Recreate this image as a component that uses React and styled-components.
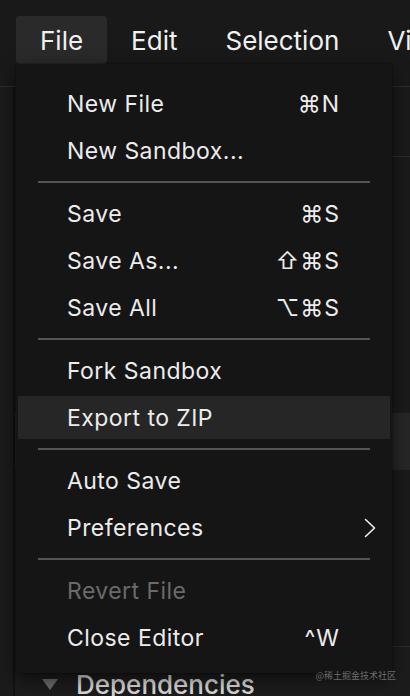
import React from 'react'
import styled, { createGlobalStyle } from 'styled-components'

const GlobalStyle = createGlobalStyle`
  html, body {
    margin: 0;
    padding: 0;
    background: #191919;
  }
  body {
    font-family: Inter, "Noto Sans", sans-serif;
    color: #ececec;
    -webkit-font-smoothing: antialiased;
  }
`

const menuItems = [
    { label: 'New File', shortcut: '⌘N' },
    { label: 'New Sandbox...' },
    { type: 'separator' },
    { label: 'Save', shortcut: '⌘S' },
    { label: 'Save As...', shortcut: '⇧⌘S' },
    { label: 'Save All', shortcut: '⌥⌘S' },
    { type: 'separator' },
    { label: 'Fork Sandbox' },
    { label: 'Export to ZIP', hovered: true },
    { type: 'separator' },
    { label: 'Auto Save' },
    { label: 'Preferences', submenu: true },
    { type: 'separator' },
    { label: 'Revert File', disabled: true },
    { label: 'Close Editor', shortcut: '^W' },
]

const ChevronRight = () => (
    <svg width="12" height="20" viewBox="0 0 12 20" fill="none">
        <polyline points="1.5,1.5 10.5,10 1.5,18.5" stroke="#f2f2f2" strokeWidth="1.6" strokeLinecap="round" strokeLinejoin="round" />
    </svg>
)

const App = () => {
    return (
        <Screen>
            <GlobalStyle />
            <MenuBar>
                <BarItem active>File</BarItem>
                <BarItem>Edit</BarItem>
                <BarItem>Selection</BarItem>
                <BarItem>View</BarItem>
            </MenuBar>
            <Workspace>
                <HeaderStrip />
                <Body>
                    <Rail />
                    <Panel>
                        <PanelRow height={69} bordered />
                        <PanelRow height={256} />
                        <PanelRow height={57} selected />
                        <PanelRow height={176} bordered />
                        <SectionRow>
                            <Caret />
                            <SectionTitle>Dependencies</SectionTitle>
                        </SectionRow>
                    </Panel>
                </Body>
            </Workspace>

            <Dropdown>
                {menuItems.map((item, i) =>
                    item.type === 'separator' ? (
                        <Separator key={i} />
                    ) : (
                        <Item key={i} hovered={item.hovered} disabled={item.disabled}>
                            <span>{item.label}</span>
                            {item.shortcut && <Shortcut>{item.shortcut}</Shortcut>}
                            {item.submenu && (
                                <SubArrow>
                                    <ChevronRight />
                                </SubArrow>
                            )}
                        </Item>
                    )
                )}
            </Dropdown>

            <Watermark>@稀土掘金技术社区</Watermark>
        </Screen>
    )
}

export default App

const Screen = styled.div`
    position: relative;
    width: 410px;
    height: 696px;
    overflow: hidden;
    background: #191919;
`

const MenuBar = styled.div`
    display: flex;
    padding: 16px 0 0 16px;
    height: 48px;
    white-space: nowrap;
`

const BarItem = styled.div`
    display: flex;
    align-items: center;
    height: 48px;
    padding: 0 24px;
    font-size: 26px;
    color: #f0f0f0;
    border-radius: 4px;
    background: ${p => (p.active ? '#2a2a2a' : 'transparent')};
`

const Workspace = styled.div`
    display: flex;
    flex-direction: column;
`

const HeaderStrip = styled.div`
    height: 22px;
    border-bottom: 1px solid #2b2b2b;
`

const Body = styled.div`
    display: flex;
`

const Rail = styled.div`
    width: 13px;
    border-right: 2px solid #121212;
    background: #1b1b1b;
`

const Panel = styled.div`
    flex: 1;
    display: flex;
    flex-direction: column;
`

const PanelRow = styled.div`
    height: ${p => p.height}px;
    background: ${p => (p.selected ? '#262626' : '#1a1a1a')};
    border-bottom: ${p => (p.bordered ? '1px solid #2c2c2c' : 'none')};
`

const SectionRow = styled.div`
    display: flex;
    align-items: center;
    gap: 18px;
    height: 74px;
    padding: 0 0 0 27px;
    background: #1c1c1c;
`

const Caret = styled.div`
    width: 0;
    height: 0;
    border-left: 8px solid transparent;
    border-right: 8px solid transparent;
    border-top: 11px solid #6a6a6a;
`

const SectionTitle = styled.div`
    font-size: 26px;
    font-weight: 500;
    color: #d6d6d6;
`

const Dropdown = styled.div`
    position: absolute;
    top: 64px;
    left: 16px;
    width: 376px;
    display: flex;
    flex-direction: column;
    padding: 16px 0 12px;
    background: #151515;
    border-radius: 0 0 4px 4px;
    box-shadow: 0 6px 18px rgba(0, 0, 0, 0.55), 0 0 2px rgba(0, 0, 0, 0.6);
`

const Item = styled.div`
    position: relative;
    display: flex;
    align-items: center;
    justify-content: space-between;
    height: 43px;
    margin: 2px;
    padding: 0 50px 0 49px;
    font-size: 23px;
    letter-spacing: 0.45px;
    white-space: nowrap;
    color: ${p => (p.disabled ? '#6a6a6a' : '#ececec')};
    background: ${p => (p.hovered ? '#262626' : 'transparent')};
`

const Shortcut = styled.span`
    font-family: Inter, "DejaVu Sans", sans-serif;
    font-size: 23px;
    letter-spacing: 1px;
`

const SubArrow = styled.span`
    position: absolute;
    right: 14px;
    top: 50%;
    display: flex;
    transform: translateY(-50%);
`

const Separator = styled.div`
    height: 2px;
    margin: 7px 22px;
    background: #555555;
`

const Watermark = styled.div`
    position: absolute;
    right: 14px;
    bottom: 14px;
    font-family: "Noto Sans CJK SC", sans-serif;
    font-size: 9px;
    color: #6e6e6e;
`
